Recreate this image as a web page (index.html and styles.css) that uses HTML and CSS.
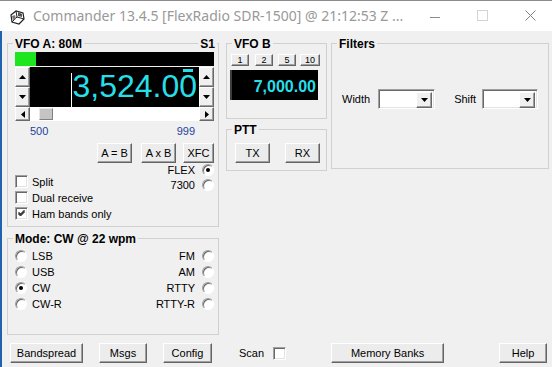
FILE: index.html
```html
<!DOCTYPE html>
<html lang="en">
<head>
    <meta charset="UTF-8">
    <meta name="viewport" content="width=device-width, initial-scale=1.0">
    <title>Commander</title>
    <link rel="stylesheet" href="styles.css">
</head>
<body>
    <div class="titlebar">
        <svg class="app-icon" width="16" height="15" viewBox="0 0 16 15">
            <path d="M2 5 L7 1 L14 3 L15 9 L10 14 L3 12 Z" fill="#fff" stroke="#222" stroke-width="1.2"/>
            <path d="M7 1 L8 7 L15 9 M8 7 L3 12" fill="none" stroke="#222" stroke-width="1"/>
            <path d="M9 2 L13 4 L13 7 L9 6 Z" fill="#555"/>
            <path d="M3 6 L6 5 L7 9 L4 10 Z" fill="#777"/>
        </svg>
        <span class="caption">Commander 13.4.5 [FlexRadio SDR-1500] @ 21:12:53 Z ...</span>
        <span class="ctl ctl-min"></span>
        <span class="ctl ctl-max"></span>
        <svg class="ctl ctl-close" width="11" height="11" viewBox="0 0 11 11">
            <path d="M0.5 0.5 L10.5 10.5 M10.5 0.5 L0.5 10.5" stroke="#808080" stroke-width="1"/>
        </svg>
    </div>

    <div class="window">
        <div class="panels">
            <div class="col col-left">
                <div class="group vfo-a">
                    <span class="group-title">VFO A: 80M</span>
                    <span class="group-title title-right">S1</span>
                    <div class="meter"><div class="meter-fill"></div></div>
                    <div class="freq-row">
                        <div class="spin">
                            <div class="spin-btn"><svg width="7" height="4"><path d="M3.5 0 L7 4 L0 4 Z"/></svg></div>
                            <div class="spin-btn"><svg width="7" height="4"><path d="M0 0 L7 0 L3.5 4 Z"/></svg></div>
                        </div>
                        <div class="freq">
                            <span class="freq-value">3,524.0<span class="sel-digit">0</span></span>
                        </div>
                        <div class="spin">
                            <div class="spin-btn"><svg width="7" height="4"><path d="M3.5 0 L7 4 L0 4 Z"/></svg></div>
                            <div class="spin-btn"><svg width="7" height="4"><path d="M0 0 L7 0 L3.5 4 Z"/></svg></div>
                        </div>
                    </div>
                    <div class="scrollbar">
                        <div class="scroll-btn"><svg width="4" height="7"><path d="M4 0 L4 7 L0 3.5 Z"/></svg></div>
                        <div class="scroll-track"><div class="scroll-thumb"></div></div>
                        <div class="scroll-btn"><svg width="4" height="7"><path d="M0 0 L4 3.5 L0 7 Z"/></svg></div>
                    </div>
                    <div class="scale"><span>500</span><span>999</span></div>
                    <div class="btn-row">
                        <button class="btn btn-ab">A = B</button>
                        <button class="btn btn-axb">A x B</button>
                        <button class="btn btn-xfc">XFC</button>
                    </div>
                    <div class="vfoa-bottom">
                        <div class="checks">
                            <label class="check-row"><span class="check"></span>Split</label>
                            <label class="check-row"><span class="check"></span>Dual receive</label>
                            <label class="check-row"><span class="check checked"><svg width="7" height="7"><path d="M0.5 3 L2.5 5 L6.5 1 M0.5 4 L2.5 6 L6.5 2 M0.5 2 L2.5 4 L6.5 0" fill="none" stroke="#000" stroke-width="1"/></svg></span>Ham bands only</label>
                        </div>
                        <div class="radios-right">
                            <div class="radio-row">FLEX<span class="radio on"></span></div>
                            <div class="radio-row">7300<span class="radio"></span></div>
                        </div>
                    </div>
                </div>

                <div class="group mode">
                    <span class="group-title">Mode: CW @ 22 wpm</span>
                    <div class="mode-grid">
                        <div class="radio-row left"><span class="radio"></span>LSB</div>
                        <div class="radio-row">FM<span class="radio"></span></div>
                        <div class="radio-row left"><span class="radio"></span>USB</div>
                        <div class="radio-row">AM<span class="radio"></span></div>
                        <div class="radio-row left"><span class="radio on"></span>CW</div>
                        <div class="radio-row">RTTY<span class="radio"></span></div>
                        <div class="radio-row left"><span class="radio"></span>CW-R</div>
                        <div class="radio-row">RTTY-R<span class="radio"></span></div>
                    </div>
                </div>
            </div>

            <div class="col col-mid">
                <div class="group vfo-b">
                    <span class="group-title">VFO B</span>
                    <div class="step-row">
                        <button class="btn step s1">1</button>
                        <button class="btn step s2">2</button>
                        <button class="btn step s5">5</button>
                        <button class="btn step s10">10</button>
                    </div>
                    <div class="freq-b">7,000.00</div>
                </div>
                <div class="group ptt">
                    <span class="group-title">PTT</span>
                    <div class="ptt-row">
                        <button class="btn">TX</button>
                        <button class="btn">RX</button>
                    </div>
                </div>
            </div>

            <div class="col col-right">
                <div class="group filters">
                    <span class="group-title">Filters</span>
                    <div class="filter-row">
                        <span class="filter-label">Width</span>
                        <div class="combo combo-width"><span class="combo-btn"><svg width="7" height="4"><path d="M0 0 L7 0 L3.5 4 Z"/></svg></span></div>
                        <span class="filter-label shift-label">Shift</span>
                        <div class="combo combo-shift"><span class="combo-btn"><svg width="7" height="4"><path d="M0 0 L7 0 L3.5 4 Z"/></svg></span></div>
                    </div>
                </div>
            </div>
        </div>

        <div class="bottom-bar">
            <button class="btn b-band">Bandspread</button>
            <button class="btn b-msgs">Msgs</button>
            <button class="btn b-config">Config</button>
            <span class="scan-label">Scan</span>
            <span class="check scan-check"></span>
            <button class="btn b-mem">Memory Banks</button>
            <button class="btn b-help">Help</button>
        </div>
    </div>
</body>
</html>
```

FILE: styles.css
```css
* {
    box-sizing: border-box;
}
body {
    margin: 0;
    width: 552px;
    height: 367px;
    overflow: hidden;
    background-color: #f0f0f0;
    font-family: "Liberation Sans", Arial, sans-serif;
    font-size: 11px;
    color: #000;
}

/* title bar */
.titlebar {
    height: 31px;
    background-color: #fff;
    border-top: 1px solid #8c8c8c;
    display: flex;
    align-items: flex-start;
}
.app-icon {
    margin: 9px 0 0 9px;
}
.caption {
    margin: 5px 0 0 8px;
    font-family: "Noto Sans", sans-serif;
    font-size: 14px;
    line-height: 20px;
    color: #999;
    white-space: nowrap;
    width: 388px;
}
.ctl-min {
    width: 10px;
    height: 1px;
    background-color: #8c8c8c;
    margin: 16px 0 0 9px;
}
.ctl-max {
    width: 11px;
    height: 11px;
    border: 1px solid #d4d4d4;
    margin: 9px 0 0 37px;
}
.ctl-close {
    margin: 9px 0 0 37px;
}

/* window body */
.window {
    height: 336px;
    border-left: 2px solid #1f62ad;
}
.panels {
    display: flex;
    align-items: flex-start;
    padding: 12px 0 0 5px;
}
.col {
    display: flex;
    flex-direction: column;
}
.col-left {
    width: 212px;
    gap: 11px;
}
.col-mid {
    width: 101px;
    margin-left: 7px;
    gap: 10px;
}
.col-right {
    width: 218px;
    margin-left: 4px;
}

.group {
    position: relative;
    border: 1px solid #d0d0d0;
}
.group-title {
    position: absolute;
    top: -7px;
    left: 5px;
    padding: 0 2px;
    background-color: #f0f0f0;
    font-size: 12px;
    font-weight: bold;
    line-height: 14px;
}
.title-right {
    left: auto;
    right: 1px;
}

/* buttons */
.btn {
    font-family: "Liberation Sans", Arial, sans-serif;
    font-size: 11px;
    color: #000;
    background-color: #ececec;
    border: 1px solid;
    border-color: #fff #646464 #646464 #fff;
    box-shadow: inset -1px -1px #a0a0a0;
    padding: 0;
    height: 20px;
    line-height: 17px;
}

/* VFO A */
.vfo-a {
    height: 184px;
    padding: 8px 4px 0 7px;
}
.meter {
    height: 14px;
    background-color: #000;
}
.meter-fill {
    width: 21px;
    height: 14px;
    background-color: #1ee61e;
}
.freq-row {
    display: flex;
    height: 40px;
    margin-top: 1px;
}
.spin {
    width: 15px;
    display: flex;
    flex-direction: column;
}
.spin-btn,
.scroll-btn,
.combo-btn {
    display: flex;
    align-items: center;
    justify-content: center;
    background-color: #f0f0f0;
    border: 1px solid;
    border-color: #fff #696969 #696969 #fff;
    box-shadow: inset -1px -1px #a0a0a0;
}
.spin-btn {
    height: 20px;
}
.freq {
    flex: 1;
    background-color: #000;
    display: flex;
    justify-content: flex-end;
    align-items: flex-end;
    padding-right: 2px;
}
.freq-value {
    font-size: 32px;
    line-height: 27px;
    height: 34px;
    color: #27dfe8;
    border-left: 1px solid #fff;
    white-space: nowrap;
}
.sel-digit {
    position: relative;
    display: inline-block;
}
.sel-digit::before {
    content: "";
    position: absolute;
    top: -4px;
    left: 4px;
    width: 10px;
    height: 3px;
    background-color: #27dfe8;
}
.scrollbar {
    display: flex;
    height: 14px;
}
.scroll-btn {
    width: 15px;
}
.scroll-track {
    flex: 1;
    background-color: #fff;
    padding: 1px 0 1px 9px;
}
.scroll-thumb {
    width: 14px;
    height: 12px;
    background-color: #c4c4c4;
    border: 1px solid;
    border-color: #e8e8e8 #808080 #808080 #e8e8e8;
}
.scale {
    display: flex;
    justify-content: space-between;
    margin-top: 4px;
    padding: 0 19px 0 15px;
    line-height: 13px;
    color: #1f3f9c;
}
.btn-row {
    display: flex;
    justify-content: flex-end;
    margin-top: 5px;
}
.btn-ab {
    width: 35px;
}
.btn-axb {
    width: 35px;
    margin-left: 9px;
}
.btn-xfc {
    width: 31px;
    margin-left: 7px;
}
.vfoa-bottom {
    display: flex;
    justify-content: space-between;
}
.checks {
    margin-top: 12px;
    display: flex;
    flex-direction: column;
    gap: 3px;
}
.check-row {
    display: flex;
    align-items: center;
    height: 13px;
}
.check {
    width: 13px;
    height: 13px;
    margin-right: 4px;
    background-color: #fff;
    border: 1px solid;
    border-color: #a0a0a0 #fff #fff #a0a0a0;
    box-shadow: inset 1px 1px #696969, inset -1px -1px #e3e3e3;
    display: flex;
    align-items: center;
    justify-content: center;
}
.radios-right {
    margin-top: -1px;
}
.radio-row {
    display: flex;
    align-items: center;
    justify-content: flex-end;
    height: 15px;
}
.radio {
    width: 12px;
    height: 12px;
    margin-left: 7px;
    border-radius: 50%;
    background-color: #fff;
    border: 1px solid;
    border-color: #a0a0a0 #fff #fff #a0a0a0;
    box-shadow: inset 1px 1px #696969;
    position: relative;
}
.radio.on::after {
    content: "";
    position: absolute;
    left: 3px;
    top: 3px;
    width: 4px;
    height: 4px;
    border-radius: 50%;
    background-color: #000;
}

/* Mode */
.mode {
    height: 97px;
    padding: 9px 4px 0 7px;
}
.mode-grid {
    display: grid;
    grid-template-columns: 1fr 1fr;
    grid-auto-rows: 16px;
}
.radio-row.left {
    justify-content: flex-start;
    height: 16px;
}
.mode-grid .radio-row {
    height: 16px;
}
.radio-row.left .radio {
    margin: 0 5px 0 0;
}

/* VFO B */
.vfo-b {
    height: 76px;
    padding: 10px 0 0 3px;
}
.step-row {
    display: flex;
    padding-left: 1px;
}
.btn.step {
    width: 18px;
    height: 12px;
    font-size: 9px;
    line-height: 10px;
}
.s2 {
    margin-left: 6px;
}
.s5 {
    margin-left: 5px;
}
.s10 {
    width: 20px !important;
    margin-left: 4px;
}
.freq-b {
    margin-top: 4px;
    width: 88px;
    height: 30px;
    background-color: #000;
    border-left: 2px solid #3c3c3c;
    color: #27dfe8;
    font-size: 16px;
    font-weight: bold;
    line-height: 27px;
    padding: 3px 2px 0 0;
    text-align: right;
}

/* PTT */
.ptt {
    height: 42px;
    padding: 13px 0 0 8px;
}
.ptt-row {
    display: flex;
    gap: 15px;
}
.ptt-row .btn {
    width: 35px;
}

/* Filters */
.filters {
    height: 126px;
    padding: 45px 0 0 10px;
}
.filter-row {
    display: flex;
    align-items: center;
    height: 20px;
}
.combo {
    height: 20px;
    background-color: #fff;
    border: 1px solid;
    border-color: #a0a0a0 #fff #fff #a0a0a0;
    box-shadow: inset 1px 1px #696969, inset -1px -1px #e3e3e3;
    display: flex;
    justify-content: flex-end;
    padding: 2px;
}
.combo-width {
    width: 57px;
    margin-left: 8px;
}
.shift-label {
    margin-left: 19px;
}
.combo-shift {
    width: 56px;
    margin-left: 6px;
}
.combo-btn {
    width: 16px;
    height: 16px;
}

/* bottom buttons */
.bottom-bar {
    display: flex;
    align-items: center;
    margin-top: 8px;
}
.b-band {
    width: 73px;
    margin-left: 8px;
}
.b-msgs {
    width: 48px;
    margin-left: 16px;
}
.b-config {
    width: 49px;
    margin-left: 16px;
}
.scan-label {
    margin-left: 27px;
}
.scan-check {
    margin-left: 9px;
}
.b-mem {
    width: 113px;
    margin-left: 41px;
}
.b-help {
    width: 48px;
    margin-left: 55px;
}
```
